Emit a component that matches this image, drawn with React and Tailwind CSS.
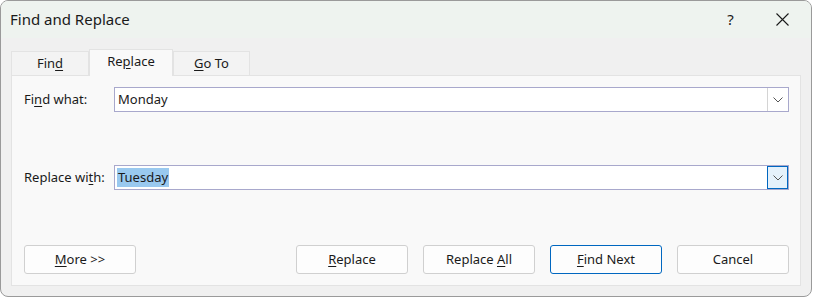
import React from 'react';

const font = { fontFamily: '"Segoe UI", "Noto Sans", "Open Sans", sans-serif' };

const Key = ({ children }) => <span className="underline underline-offset-2">{children}</span>;

const Chevron = () => (
  <svg width="10" height="6" viewBox="0 0 10 6" fill="none">
    <path d="M0.5 0.5 L5 5 L9.5 0.5" stroke="#555" strokeWidth="1" />
  </svg>
);

const Combo = ({ value, selected, focused }) => (
  <div className="flex-1 h-[25px] flex items-stretch border border-[#a8a8cc] bg-white">
    <div className="flex-1 flex items-center pl-[2px] text-[13px] text-[#1a1a1a]">
      {selected ? <span className="bg-[#99c9ef] px-[1px] leading-[19px]">{value}</span> : <span className="px-[1px]">{value}</span>}
    </div>
    <div
      className={
        focused
          ? 'w-[21px] flex items-center justify-center border border-[#0067c0] bg-[#e5f1fb]'
          : 'w-[21px] flex items-center justify-center border-l border-[#d4d4d4] bg-white'
      }
    >
      <Chevron />
    </div>
  </div>
);

const Btn = ({ children, primary }) => (
  <button
    className={
      'w-[112px] h-[29px] rounded-[3px] bg-[#fdfdfd] text-[13px] text-[#1a1a1a] ' +
      (primary ? 'border border-[#0067c0]' : 'border border-[#d0d0d0]')
    }
  >
    {children}
  </button>
);

export default function App() {
  return (
    <div style={font} className="w-[813px] h-[298px] bg-white">
      <div className="w-[812px] h-[297px] flex flex-col rounded-lg border border-[#9a9a9a] bg-[#f0f0f0] overflow-hidden">
        {/* title bar */}
        <div className="h-[37px] shrink-0 flex items-center bg-[#eef3ef] pl-[9px]">
          <span className="text-[15px] text-[#1a1a1a]">Find and Replace</span>
          <div className="ml-auto flex items-center">
            <span className="w-[57px] text-center text-[15px] text-[#1a1a1a]">?</span>
            <span className="w-[46px] mr-[6px] flex justify-center">
              <svg width="13" height="13" viewBox="0 0 13 13">
                <path d="M0.5 0.5 L12.5 12.5 M12.5 0.5 L0.5 12.5" stroke="#1a1a1a" strokeWidth="1.1" />
              </svg>
            </span>
          </div>
        </div>

        {/* body */}
        <div className="flex-1 flex flex-col px-[10px] pt-[11px] pb-[10px]">
          {/* tabs */}
          <div className="flex items-end h-[26px] relative z-10">
            <div className="w-[78px] h-[24px] flex items-center justify-center border border-b-0 border-[#e3e3e3] bg-[#f3f3f3] text-[13px] text-[#1a1a1a]">
              Fin<Key>d</Key>
            </div>
            <div className="w-[84px] h-[27px] -mb-px flex items-center justify-center border border-b-0 border-[#e3e3e3] bg-[#f9f9f9] text-[13px] text-[#1a1a1a] pb-[3px]">
              Re<Key>p</Key>lace
            </div>
            <div className="w-[77px] h-[24px] flex items-center justify-center border border-b-0 border-[#e3e3e3] bg-[#f3f3f3] text-[13px] text-[#1a1a1a]">
              <Key>G</Key>o To
            </div>
          </div>

          {/* panel */}
          <div className="flex-1 flex flex-col border border-[#e3e3e3] bg-[#f9f9f9] pl-[12px] pr-[11px] pt-[11px]">
            <div className="flex items-center">
              <span className="w-[90px] text-[13px] text-[#1a1a1a]">Fi<Key>n</Key>d what:</span>
              <Combo value="Monday" />
            </div>
            <div className="flex items-center mt-[53px]">
              <span className="w-[90px] text-[13px] text-[#1a1a1a]">Replace wi<Key>t</Key>h:</span>
              <Combo value="Tuesday" selected focused />
            </div>
            <div className="flex items-center mt-[55px]">
              <Btn>
                <Key>M</Key>ore &gt;&gt;
              </Btn>
              <div className="ml-auto flex gap-[15px]">
                <Btn>
                  <Key>R</Key>eplace
                </Btn>
                <Btn>
                  Replace <Key>A</Key>ll
                </Btn>
                <Btn primary>
                  <Key>F</Key>ind Next
                </Btn>
                <Btn>Cancel</Btn>
              </div>
            </div>
          </div>
        </div>
      </div>
    </div>
  );
}
